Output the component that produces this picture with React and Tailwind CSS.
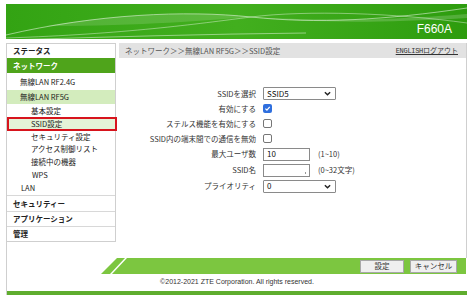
import React from "react";

function Check({ checked }) {
  return checked ? (
    <span className="w-[9px] h-[9px] rounded-[2px] bg-[#2f6fde] flex items-center justify-center">
      <svg width="7" height="7" viewBox="0 0 10 10">
        <path d="M2 5.2 L4.2 7.4 L8.2 2.8" fill="none" stroke="white" strokeWidth="1.8" />
      </svg>
    </span>
  ) : (
    <span className="w-[9px] h-[9px] rounded-[2px] border border-[#767676] bg-white" />
  );
}

function Chevron() {
  return (
    <svg width="7" height="5" viewBox="0 0 8 5">
      <path d="M1 1 L4 4 L7 1" fill="none" stroke="#222" strokeWidth="1.6" />
    </svg>
  );
}

function Row({ label, children, h }) {
  return (
    <div className={`flex items-center ${h}`}>
      <div className="w-[140px] pr-[3px] text-right text-[7.5px] text-[#333] whitespace-nowrap">{label}</div>
      <div className="ml-[4px] flex items-center gap-[8px]">{children}</div>
    </div>
  );
}

export default function App() {
  return (
    <div className="w-[474px] h-[299px] bg-white overflow-hidden font-['Noto_Sans_CJK_JP',sans-serif] text-[#333]">
      {/* header */}
      <div className="pt-[4px] pl-[6px]">
        <div className="relative w-[461px] h-[35px] bg-linear-to-r from-[#33a313] via-[#42af1e] to-[#2d9c0e] overflow-hidden flex items-end justify-end pr-[15px] pb-[4px]">
          <svg className="absolute inset-0" width="461" height="35" viewBox="0 0 461 35">
            <path d="M0 31 C90 10 180 6 245 13 S 380 16 461 4" fill="none" stroke="white" strokeOpacity="0.5" strokeWidth="1" />
            <path d="M0 34 C120 30 190 20 245 13 S 390 9 461 19" fill="none" stroke="white" strokeOpacity="0.4" strokeWidth="1" />
            <path d="M40 22 C120 8 200 8 245 13 C200 16 140 22 40 22 Z" fill="white" fillOpacity="0.14" />
            <path d="M245 13 C300 16 360 18 461 10 L461 14 C360 20 300 18 245 13 Z" fill="white" fillOpacity="0.18" />
            <path d="M0 36 C100 33 200 30 300 29" fill="none" stroke="white" strokeOpacity="0.45" strokeWidth="1" />
          </svg>
          <span className="relative text-white text-[12px] font-['Liberation_Sans',sans-serif] leading-none">F660A</span>
        </div>
      </div>

      {/* body */}
      <div className="mt-[4px] ml-[6px] w-[461px] border-l border-[#cfcfcf] flex flex-col">
        <div className="flex h-[215px]">
          {/* sidebar */}
          <div className="w-[109px]">
            <div className="border-y border-r border-[#cfcfcf] text-[7.5px] text-[#222]">
              <div className="h-[14px] flex items-center pl-[6px] font-bold">ステータス</div>
              <div className="h-[15px] flex items-center pl-[6px] font-bold bg-[#4fa41b] text-white">ネットワーク</div>
              <div className="h-[17px] flex items-center pl-[13px]">無線LAN RF2.4G</div>
              <div className="h-[14px] flex items-center pl-[13px] bg-[#d3ecbd]">無線LAN RF5G</div>
              <div className="h-[13px] flex items-center pl-[24px]">基本設定</div>
              <div className="relative h-[14px] flex items-center pl-[24px] bg-[#e4f3d7]">
                SSID設定
                <div className="absolute top-0 bottom-0 left-0 -right-[2px] border-2 border-[#d7141d]" />
              </div>
              <div className="h-[12px] flex items-center pl-[24px]">セキュリティ設定</div>
              <div className="h-[12px] flex items-center pl-[24px]">アクセス制御リスト</div>
              <div className="h-[13px] flex items-center pl-[24px]">接続中の機器</div>
              <div className="h-[13px] flex items-center pl-[25px]">WPS</div>
              <div className="h-[14px] flex items-center pl-[14px]">LAN</div>
              <div className="h-[16px] flex items-center pl-[6px] font-bold border-t border-[#d8d8d8]">セキュリティー</div>
              <div className="h-[15px] flex items-center pl-[6px] font-bold border-t border-[#d8d8d8]">アプリケーション</div>
              <div className="h-[15px] flex items-center pl-[6px] font-bold border-t border-[#d8d8d8]">管理</div>
            </div>
          </div>

          {/* main */}
          <div className="ml-[3px] w-[348px] border-r border-[#cfcfcf]">
            <div className="h-[15px] bg-[#e2e2e2] flex items-center justify-between pl-[6px] pr-[8px] text-[7.5px] text-[#555]">
              <span>ネットワーク＞＞無線LAN RF5G＞＞SSID設定</span>
              <span className="text-[#333] text-[7px]">
                <span className="underline font-['Liberation_Mono',monospace] tracking-[-0.3px]">ENGLISH</span>
                <span className="underline">ログアウト</span>
              </span>
            </div>
            <div className="pt-[28px]">
              <Row label="SSIDを選択" h="h-[15px]">
                <div className="w-[73px] h-[13px] border border-[#8a8a8a] rounded-[1px] bg-white flex items-center justify-between pl-[3px] pr-[4px] text-[8px] text-[#111]">
                  <span>SSID5</span>
                  <Chevron />
                </div>
              </Row>
              <Row label="有効にする" h="h-[15px]">
                <Check checked />
              </Row>
              <Row label="ステルス機能を有効にする" h="h-[15px]">
                <Check />
              </Row>
              <Row label="SSID内の端末間での通信を無効" h="h-[15px]">
                <Check />
              </Row>
              <Row label="最大ユーザ数" h="h-[16px]">
                <div className="w-[47px] h-[13px] border border-[#8a8a8a] bg-white flex items-center pl-[3px] text-[8px] text-[#111]">10</div>
                <span className="text-[7.5px] text-[#333]">(1~10)</span>
              </Row>
              <Row label="SSID名" h="h-[16px]">
                <div className="relative w-[47px] h-[13px] border border-[#8a8a8a] bg-white">
                  <span className="absolute right-[3px] bottom-[2px] w-[1px] h-[2px] bg-[#999]" />
                </div>
                <span className="text-[7.5px] text-[#333]">(0~32文字)</span>
              </Row>
              <Row label="プライオリティ" h="h-[16px]">
                <div className="w-[73px] h-[13px] border border-[#8a8a8a] rounded-[1px] bg-white flex items-center justify-between pl-[3px] pr-[4px] text-[8px] text-[#111]">
                  <span>0</span>
                  <Chevron />
                </div>
              </Row>
            </div>
          </div>
        </div>

        {/* footer bar */}
        <div className="h-[16px] flex pl-[93px]">
          <svg width="30" height="16" viewBox="0 0 30 16" className="shrink-0">
            <polygon points="17,0 25,0 10,16 1,16" fill="#7cc640" />
            <polygon points="27,0 30,0 30,16 12,16" fill="#7cc640" />
          </svg>
          <div className="w-[336px] bg-[#7cc640] flex items-center justify-end gap-[6px] pr-[9px]">
            <div className="w-[44px] h-[13px] bg-[#efefef] border border-[#a8a8a8] flex items-center justify-center text-[7.5px] text-[#333]">設定</div>
            <div className="w-[47px] h-[13px] bg-[#efefef] border border-[#a8a8a8] flex items-center justify-center text-[7.5px] text-[#333]">キャンセル</div>
          </div>
        </div>
        <div className="h-[17px] flex items-center justify-center text-[7px] text-[#333] font-['Liberation_Sans',sans-serif]">
          ©2012-2021 ZTE Corporation. All rights reserved.
        </div>
        <div className="h-[4px] bg-[#5fad2e]" />
      </div>
    </div>
  );
}
